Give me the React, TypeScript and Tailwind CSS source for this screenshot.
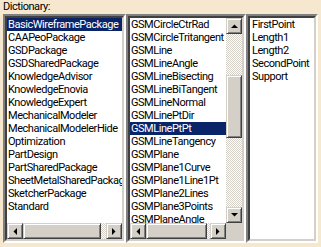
import React from 'react';

const packages = [
    "BasicWireframePackage",
    "CAAPeoPackage",
    "GSDPackage",
    "GSDSharedPackage",
    "KnowledgeAdvisor",
    "KnowledgeEnovia",
    "KnowledgeExpert",
    "MechanicalModeler",
    "MechanicalModelerHide",
    "Optimization",
    "PartDesign",
    "PartSharedPackage",
    "SheetMetalSharedPackage",
    "SketcherPackage",
    "Standard"
];

const members = [
    "GSMCircleCtrRad",
    "GSMCircleTritangent",
    "GSMLine",
    "GSMLineAngle",
    "GSMLineBisecting",
    "GSMLineBiTangent",
    "GSMLineNormal",
    "GSMLinePtDir",
    "GSMLinePtPt",
    "GSMLineTangency",
    "GSMPlane",
    "GSMPlane1Curve",
    "GSMPlane1Line1Pt",
    "GSMPlane2Lines",
    "GSMPlane3Points",
    "GSMPlaneAngle",
    "GSMPlaneEquation"
];

const attributes = ["FirstPoint", "Length1", "Length2", "SecondPoint", "Support"];

const sunken = "border-2 border-t-[#808080] border-l-[#808080] border-b-white border-r-white";
const sunkenInner = "border-2 border-t-[#404040] border-l-[#404040] border-b-[#d4d0c8] border-r-[#d4d0c8]";
const raised = "bg-[#d4d0c8] border border-t-[#d4d0c8] border-l-[#d4d0c8] border-b-[#404040] border-r-[#404040] shadow-[inset_1px_1px_0_#fff,inset_-1px_-1px_0_#808080]";
const checker = "bg-[repeating-conic-gradient(#ffffff_0%_25%,#d4d0c8_0%_50%)] bg-[length:2px_2px]";

function Arrow({ dir }: { dir: 'up' | 'down' | 'left' | 'right' }) {
    const pts = {
        up: "0,4 7,4 3.5,0.5",
        down: "0,0 7,0 3.5,3.5",
        left: "4,0 4,7 0.5,3.5",
        right: "0,0 0,7 3.5,3.5"
    }[dir];
    const vertical = dir === 'up' || dir === 'down';
    return (
        <svg width={vertical ? 7 : 4} height={vertical ? 4 : 7} viewBox={vertical ? "0 0 7 4" : "0 0 4 7"}>
            <polygon points={pts} fill="#000" />
        </svg>
    );
}

function Btn({ dir }: { dir: 'up' | 'down' | 'left' | 'right' }) {
    return (
        <div className={`w-4 h-4 shrink-0 flex items-center justify-center ${raised}`}>
            <Arrow dir={dir} />
        </div>
    );
}

function Row({ text, selected }: { text: string; selected?: boolean }) {
    return (
        <div className={`h-[13px] leading-[13px] pl-[1px] whitespace-nowrap ${selected ? 'bg-[#0a246a] text-white' : 'text-black'}`}>
            {text}
        </div>
    );
}

export default function App() {
    return (
        <div className="w-[321px] h-[247px] bg-[#f6e8cf] font-['Roboto',Arial,sans-serif] text-[11px] tracking-[-0.45px] overflow-hidden">
            <div className="h-[14px] leading-[13px] pl-[3px] text-black">Dictionary:</div>

            <div className="flex pl-[3px] h-[229px]">
                {/* Packages */}
                <div className={`w-[123px] h-full ${sunken}`}>
                    <div className={`h-full flex flex-col bg-white ${sunkenInner}`}>
                        <div className="flex-1 overflow-hidden">
                            {packages.map((p, i) => (
                                <Row key={p} text={p} selected={i === 0} />
                            ))}
                        </div>
                        <div className="h-4 flex bg-[#d4d0c8]">
                            <Btn dir="left" />
                            <div className={`flex-1 flex ${checker}`}>
                                <div className={`w-[78px] h-4 ${raised}`} />
                            </div>
                            <Btn dir="right" />
                        </div>
                    </div>
                </div>

                {/* Members */}
                <div className={`w-[120px] h-full ${sunken}`}>
                    <div className={`h-full flex flex-col bg-white ${sunkenInner}`}>
                        <div className="flex-1 flex min-h-0">
                            <div className="flex-1 overflow-hidden">
                                {members.map((m, i) => (
                                    <Row key={m} text={m} selected={i === 8} />
                                ))}
                            </div>
                            <div className="w-4 flex flex-col">
                                <Btn dir="up" />
                                <div className={`flex-1 flex flex-col ${checker}`}>
                                    <div className={`mt-[41px] h-[63px] w-4 ${raised}`} />
                                </div>
                                <Btn dir="down" />
                            </div>
                        </div>
                        <div className="h-4 flex bg-[#d4d0c8]">
                            <Btn dir="left" />
                            <div className={`flex-1 flex ${checker}`}>
                                <div className={`w-[61px] h-4 ${raised}`} />
                            </div>
                            <Btn dir="right" />
                            <div className="w-4 h-4 bg-[#d4d0c8]" />
                        </div>
                    </div>
                </div>

                {/* Attributes */}
                <div className={`w-[72px] h-full ${sunken}`}>
                    <div className={`h-full bg-white pl-[1px] ${sunkenInner}`}>
                        {attributes.map(a => (
                            <Row key={a} text={a} />
                        ))}
                    </div>
                </div>
            </div>
        </div>
    );
}
